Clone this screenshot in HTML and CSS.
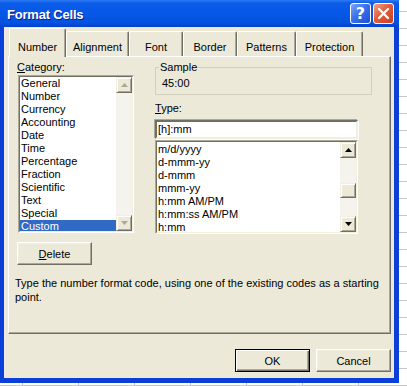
FILE: index.html
```html
<!DOCTYPE html>
<html lang="en">
<head>
    <meta charset="UTF-8">
    <title>Format Cells</title>
    <link rel="stylesheet" href="styles.css">
</head>
<body>
    <div class="window">
        <div class="titlebar">
            <span class="title">Format Cells</span>
            <div class="caption-btns">
                <span class="cap-btn help">?</span>
                <span class="cap-btn close">
                    <svg width="13" height="13" viewBox="0 0 13 13">
                        <path d="M2 2 L11 11 M11 2 L2 11" stroke="#fff" stroke-width="2.4" stroke-linecap="round"/>
                    </svg>
                </span>
            </div>
        </div>

        <div class="frame">
            <div class="client">
                <div class="tabs">
                    <div class="tab active" style="width: 57px">Number</div>
                    <div class="tab" style="width: 63px">Alignment</div>
                    <div class="tab" style="width: 54px">Font</div>
                    <div class="tab" style="width: 54px">Border</div>
                    <div class="tab" style="width: 59px">Patterns</div>
                    <div class="tab" style="width: 67px">Protection</div>
                </div>

                <div class="panel">
                    <div class="cols">
                        <div class="col-left">
                            <div class="label"><u>C</u>ategory:</div>
                            <div class="listbox cat-list">
                                <div class="listbox-inner">
                                    <ul class="items">
                                        <li>General</li>
                                        <li>Number</li>
                                        <li>Currency</li>
                                        <li>Accounting</li>
                                        <li>Date</li>
                                        <li>Time</li>
                                        <li>Percentage</li>
                                        <li>Fraction</li>
                                        <li>Scientific</li>
                                        <li>Text</li>
                                        <li>Special</li>
                                        <li class="selected">Custom</li>
                                    </ul>
                                    <div class="scrollbar disabled">
                                        <div class="sb-btn">
                                            <svg width="7" height="4" viewBox="0 0 7 4"><polygon points="3.5,0 7,4 0,4"/></svg>
                                        </div>
                                        <div class="sb-track"></div>
                                        <div class="sb-btn">
                                            <svg width="7" height="4" viewBox="0 0 7 4"><polygon points="0,0 7,0 3.5,4"/></svg>
                                        </div>
                                    </div>
                                </div>
                            </div>
                        </div>

                        <div class="col-right">
                            <fieldset class="sample">
                                <legend>Sample</legend>
                                <div class="sample-value">45:00</div>
                            </fieldset>

                            <div class="label type-label"><u>T</u>ype:</div>
                            <div class="textbox">[h]:mm</div>

                            <div class="listbox type-list">
                                <div class="listbox-inner">
                                    <ul class="items">
                                        <li>m/d/yyyy</li>
                                        <li>d-mmm-yy</li>
                                        <li>d-mmm</li>
                                        <li>mmm-yy</li>
                                        <li>h:mm AM/PM</li>
                                        <li>h:mm:ss AM/PM</li>
                                        <li>h:mm</li>
                                    </ul>
                                    <div class="scrollbar">
                                        <div class="sb-btn">
                                            <svg width="7" height="4" viewBox="0 0 7 4"><polygon points="3.5,0 7,4 0,4"/></svg>
                                        </div>
                                        <div class="sb-track">
                                            <div class="sb-thumb"></div>
                                        </div>
                                        <div class="sb-btn">
                                            <svg width="7" height="4" viewBox="0 0 7 4"><polygon points="0,0 7,0 3.5,4"/></svg>
                                        </div>
                                    </div>
                                </div>
                            </div>
                        </div>
                    </div>

                    <button class="btn delete-btn"><u>D</u>elete</button>

                    <p class="desc">Type the number format code, using one of the existing codes as a starting<br>point.</p>
                </div>

                <div class="footer">
                    <button class="btn default">OK</button>
                    <button class="btn">Cancel</button>
                </div>
            </div>
        </div>
    </div>
</body>
</html>
```

FILE: styles.css
```css
* {
    margin: 0;
    padding: 0;
    box-sizing: border-box;
}

body {
    width: 407px;
    height: 386px;
    overflow: hidden;
    font-family: "Liberation Sans", Arial, sans-serif;
    font-size: 11px;
    color: #000;
    background-color: #fff;
    background-image:
        repeating-linear-gradient(to bottom, transparent 0 11px, #c9c9c9 11px 12px, transparent 12px 17px),
        repeating-linear-gradient(to right, transparent 0 22px, #c9c9c9 22px 23px, transparent 23px 56px);
}

/* window frame */

.window {
    width: 399px;
    height: 383px;
    display: flex;
    flex-direction: column;
    background: #0a3fd8;
}

.titlebar {
    height: 27px;
    display: flex;
    align-items: center;
    justify-content: space-between;
    padding: 0 5px 0 7px;
    background: linear-gradient(to bottom, #2d7af2 0%, #0a5ce8 12%, #0558e6 50%, #0452df 85%, #0340cc 100%);
}

.title {
    color: #fff;
    font-weight: bold;
    font-size: 13px;
    letter-spacing: -0.2px;
    text-shadow: 1px 1px 0 #0a1f8a;
    padding-top: 1px;
}

.caption-btns {
    display: flex;
    gap: 2px;
}

.cap-btn {
    width: 21px;
    height: 21px;
    border: 1px solid #fff;
    border-radius: 3px;
    display: flex;
    align-items: center;
    justify-content: center;
    color: #fff;
}

.cap-btn.help {
    background: linear-gradient(135deg, #7ea6fb 0%, #3a70ec 45%, #1f50d8 100%);
    font-family: "DejaVu Sans", sans-serif;
    font-weight: bold;
    font-size: 16px;
}

.cap-btn.close {
    background: linear-gradient(135deg, #f3a287 0%, #e25c3b 45%, #c8411f 100%);
}

.frame {
    flex: 1;
    display: flex;
    padding: 0 5px 5px 4px;
}

.client {
    flex: 1;
    display: flex;
    flex-direction: column;
    background: #ece9d8;
    border-left: 1px solid #f4e8ee;
}

/* tabs */

.tabs {
    height: 29px;
    display: flex;
    align-items: flex-end;
    padding-left: 4px;
}

.tab {
    height: 25px;
    padding-top: 8px;
    line-height: 14px;
    text-align: center;
    border-top: 1px solid #fff;
    border-left: 1px solid #fff;
    border-right: 1px solid #716f64;
    border-radius: 2px 2px 0 0;
    box-shadow: inset -1px 0 #aca899;
    background: #ece9d8;
}

.tab.active {
    height: 29px;
    padding-top: 11px;
    margin-bottom: -1px;
    position: relative;
    z-index: 1;
}

/* tab page */

.panel {
    height: 278px;
    margin: 0 3px 0 3px;
    padding: 4px 8px 0 8px;
    border-top: 1px solid #fff;
    border-left: 1px solid #fff;
    border-right: 1px solid #716f64;
    border-bottom: 1px solid #716f64;
    box-shadow: inset -1px -1px #aca899;
}

.cols {
    display: grid;
    grid-template-columns: 117px 217px;
    column-gap: 21px;
}

.label {
    line-height: 13px;
}

.label u, .btn u {
    text-decoration: underline;
}

.listbox {
    background: #fff;
    border: 1px solid;
    border-color: #aca899 #fff #fff #aca899;
}

.listbox-inner {
    height: 100%;
    display: flex;
    border: 1px solid;
    border-color: #716f64 #f1efe2 #f1efe2 #716f64;
    overflow: hidden;
}

.items {
    flex: 1;
    list-style: none;
    overflow: hidden;
}

.items li {
    height: 13px;
    line-height: 13px;
    padding-left: 1px;
    white-space: nowrap;
}

.items li.selected {
    background: #316ac5;
    color: #fff;
}

.cat-list {
    width: 116px;
    height: 158px;
    margin: 1px 0 0 1px;
}

.type-list {
    width: 203px;
    height: 94px;
    margin-top: 1px;
}

.type-list .items {
    padding-top: 1px;
}

.scrollbar {
    width: 16px;
    display: flex;
    flex-direction: column;
    background: #f4f3ee;
}

.sb-btn, .sb-thumb {
    height: 16px;
    background: #ece9d8;
    border: 1px solid;
    border-color: #f1efe2 #716f64 #716f64 #f1efe2;
    box-shadow: inset 1px 1px #fff, inset -1px -1px #aca899;
    display: flex;
    align-items: center;
    justify-content: center;
}

.sb-btn polygon {
    fill: #000;
}

.scrollbar.disabled .sb-btn polygon {
    fill: #aca899;
}

.sb-track {
    flex: 1;
}

.sb-thumb {
    height: 15px;
    margin-top: 25px;
}

.sample {
    height: 34px;
    border: 1px solid #d0d0bf;
    padding: 3px 0 0 6px;
}

.sample legend {
    line-height: 13px;
    padding: 0 1px;
    margin-left: -3px;
}

.sample-value {
    line-height: 13px;
}

.type-label {
    margin-top: 7px;
}

.textbox {
    width: 203px;
    height: 19px;
    margin-top: 5px;
    padding-left: 1px;
    line-height: 15px;
    background: #fff;
    border: 2px solid;
    border-color: #716f64 #f1efe2 #f1efe2 #716f64;
    box-shadow: -1px -1px 0 #aca899, 1px 1px 0 #fff;
}

/* buttons */

.btn {
    width: 75px;
    height: 23px;
    font-family: inherit;
    font-size: 11px;
    color: #000;
    background: #ece9d8;
    border: 1px solid;
    border-color: #fff #716f64 #716f64 #fff;
    box-shadow: inset -1px -1px #aca899, inset 1px 1px #f1efe2;
}

.btn.default {
    border: 1px solid #000;
    box-shadow: inset 1px 1px #fff, inset -1px -1px #716f64, inset -2px -2px #aca899;
}

.delete-btn {
    display: block;
    margin-top: 8px;
}

.desc {
    margin: 11px 0 0 -2px;
    line-height: 14px;
}

.footer {
    display: flex;
    justify-content: flex-end;
    gap: 6px;
    padding: 15px 3px 0 0;
}
```
